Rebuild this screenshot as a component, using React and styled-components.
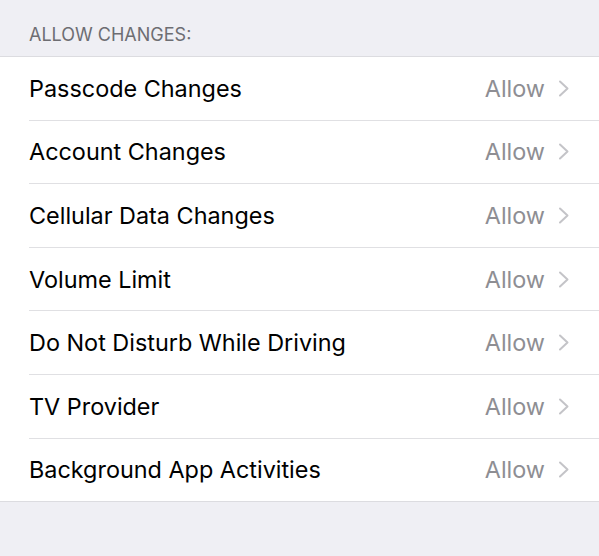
import React from "react";
import styled, { createGlobalStyle } from "styled-components";

const Global = createGlobalStyle`
  html, body { margin: 0; padding: 0; background: #efeff4; }
  body { font-family: Inter, "Liberation Sans", Arial, sans-serif; -webkit-font-smoothing: antialiased; }
`;

const Page = styled.div`
  width: 599px;
  height: 556px;
  background: #efeff4;
  overflow: hidden;
`;

const SectionHeader = styled.div`
  height: 56px;
  box-sizing: border-box;
  padding: 24px 0 0 29px;
  font-size: 18px;
  color: #6d6d72;
`;

const List = styled.div`
  background: #ffffff;
  border-top: 1px solid #dcdce0;
  border-bottom: 1px solid #dcdce0;
`;

const Row = styled.div`
  height: 62.6px;
  display: flex;
  align-items: center;
  padding-left: 29px;
  padding-right: 29px;
  box-sizing: content-box;
  & + & {
    border-top: 1px solid #e0e0e3;
    margin-left: 29px;
    padding-left: 0;
  }
`;

const Label = styled.span`
  flex: 1;
  font-size: 23.4px;
  color: #000000;
`;

const Value = styled.span`
  font-size: 23.4px;
  color: #8e8e93;
  margin-right: 13px;
`;

const Chevron = () => (
  <svg width="12" height="17" viewBox="0 0 12 17" fill="none">
    <path d="M2 1.5 L9.5 8.5 L2 15.5" stroke="#c4c4c8" strokeWidth="2" strokeLinecap="round" strokeLinejoin="round" />
  </svg>
);

const items = [
  "Passcode Changes",
  "Account Changes",
  "Cellular Data Changes",
  "Volume Limit",
  "Do Not Disturb While Driving",
  "TV Provider",
  "Background App Activities",
];

export default function App() {
  return (
    <Page>
      <Global />
      <SectionHeader>ALLOW CHANGES:</SectionHeader>
      <List>
        {items.map((t) => (
          <Row key={t}>
            <Label>{t}</Label>
            <Value>Allow</Value>
            <Chevron />
          </Row>
        ))}
      </List>
    </Page>
  );
}
